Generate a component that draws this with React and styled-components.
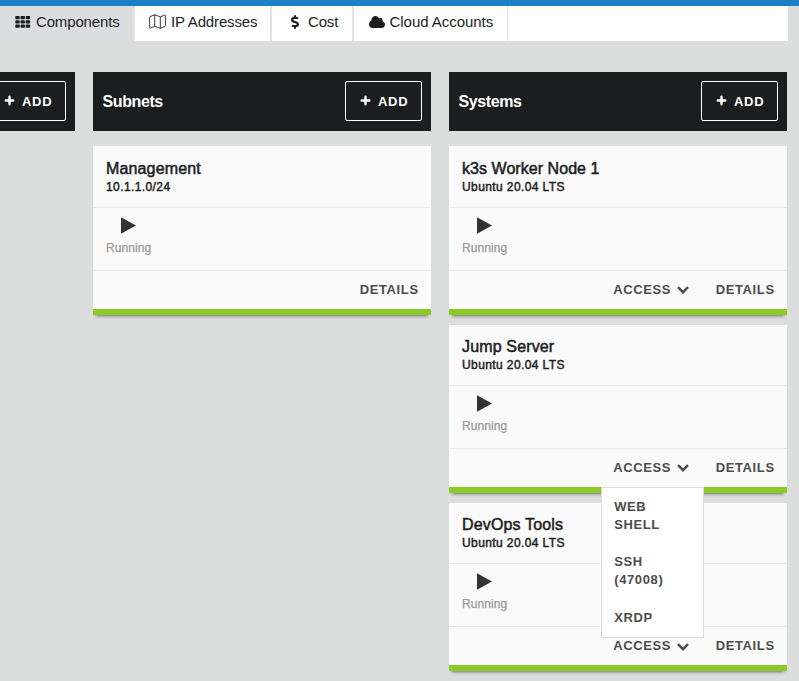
import React from "react";
import styled, { createGlobalStyle } from "styled-components";

const GlobalStyle = createGlobalStyle`
  * { box-sizing: border-box; }
  body {
    margin: 0;
    background: #dcdedd;
    color: #1c1d1e;
    font-family: "Liberation Sans", Arial, sans-serif;
    overflow: hidden;
  }
`;

const Page = styled.div`
  width: 799px;
  height: 681px;
  overflow: hidden;
`;

const TopBar = styled.div`
  height: 6px;
  background: #1b80c4;
`;

const TabBar = styled.nav`
  display: flex;
  height: 35px;
  width: 788px;
  background: #fff;
`;

const Tab = styled.a`
  display: flex;
  width: ${(p) => p.$width}px;
  padding-left: ${(p) => p.$pad}px;
  border-right: ${(p) => p.$edge ?? 2}px solid #e3e4e5;
  background: ${(p) => (p.$active ? "#dcdde0" : "#fff")};
  font-size: 15px;
  line-height: 32px;
  white-space: nowrap;

  svg { flex: none; margin: ${(p) => p.$iconTop}px ${(p) => p.$gap}px 0 0; }
`;

const TabText = styled.span`
  letter-spacing: ${(p) => p.$track ?? 0}px;
`;

const Board = styled.main`
  display: grid;
  grid-template-columns: 338px 338px 338px;
  column-gap: 18px;
  align-items: start;
  width: 1050px;
  margin: 31px 0 0 -263px;
`;

const ColumnHeader = styled.header`
  display: flex;
  align-items: flex-start;
  justify-content: space-between;
  height: 59px;
  padding: 9px 9px 0 9.5px;
  background: #1c1d1f;
  color: #fff;
`;

const ColumnTitle = styled.h2`
  margin: 11px 0 0;
  font-size: 16px;
  line-height: 20px;
  font-weight: 700;
  letter-spacing: -0.4px;
`;

const AddButton = styled.button`
  display: flex;
  align-items: center;
  gap: 7px;
  width: 77px;
  height: 40px;
  padding: 2px 0 0 14px;
  border: 1px solid #fff;
  border-radius: 2px;
  background: transparent;
  color: #fff;
  font: 700 13px/18px "Liberation Sans", Arial, sans-serif;
  letter-spacing: 0.7px;

  svg { margin-top: -4px; }
`;

const CardList = styled.div`
  display: flex;
  flex-direction: column;
  gap: 9.9px;
  padding-top: 15.4px;
`;

const Card = styled.article`
  height: 168.4px;
  background: #fafafa;
  border-bottom: 6px solid #8bca27;
  box-shadow: 0 4px 3px -3px rgba(0, 0, 0, 0.5);
`;

const CardHeader = styled.div`
  height: 60.4px;
  padding: 12.2px 13px 0;
`;

const CardTitle = styled.h3`
  margin: 0 0 1.1px;
  font-size: 16px;
  line-height: 19px;
  font-weight: 400;
  letter-spacing: ${(p) => p.$track ?? 0}px;
  -webkit-text-stroke: 0.5px currentColor;
`;

const CardSubtitle = styled.div`
  font-size: 12px;
  line-height: 17px;
  letter-spacing: 0.4px;
  -webkit-text-stroke: 0.45px currentColor;
`;

const CardStatus = styled.div`
  display: flex;
  flex-direction: column;
  height: 63px;
  padding: 9px 13px 0;
  border-top: 1px solid #e8e9e9;
  color: #999;
  font-size: 12px;
  line-height: 16px;
  letter-spacing: 0.08px;
  -webkit-text-stroke: 0.25px currentColor;

  svg { margin: 0 0 6px 15px; }
`;

const CardFooter = styled.div`
  display: flex;
  justify-content: flex-end;
  gap: 27px;
  height: 39px;
  padding: 9.8px 12.3px 0;
  border-top: 1px solid #e8e9e9;
`;

const Action = styled.div`
  position: relative;
  display: flex;
  height: 18px;
  color: #4c4c4c;
  font-size: 13px;
  font-weight: 700;
  line-height: 18px;
  letter-spacing: 0.63px;

  > svg { margin: 5.5px 0 0 5.5px; }
`;

const Menu = styled.div`
  position: absolute;
  z-index: 2;
  top: 28.4px;
  left: -12px;
  display: flex;
  flex-direction: column;
  gap: 19.15px;
  width: 103px;
  height: 151px;
  padding: 10px 12px;
  border: 1px solid #dadbdb;
  background: #fff;
`;

const MenuItem = styled.a`
  width: 60px;
  line-height: 18px;
`;

const GridIcon = () => (
  <svg width="16" height="12" viewBox="0 0 16 12" fill="#1c1d1f">
    {[0, 4.2, 8.4].map((y) =>
      [0.3, 5.5, 10.7].map((x) => (
        <rect key={`${x}-${y}`} x={x} y={y} width="4.4" height="3.3" rx="0.7" />
      ))
    )}
  </svg>
);

const MapIcon = () => (
  <svg width="17" height="16" viewBox="0 0 17 16" fill="none" stroke="#333" strokeWidth="0.95" strokeLinejoin="round">
    <path d="M.6 3.3Q.6 2.8 1.1 2.6L5.7.8 11.3 2.9 15.7 1.1Q16.4.9 16.4 1.6V11.7Q16.4 12.2 15.9 12.4L11.3 14.4 5.7 12.3 1.3 14.1Q.6 14.4.6 13.7Z" />
    <path d="M5.7.8V12.3M11.3 2.9V14.4" />
  </svg>
);

const DollarIcon = () => (
  <svg width="8" height="14" viewBox="0 0 288 512" fill="#1c1d1f" preserveAspectRatio="none">
    <path d="M209.2 233.4l-108-31.6C88.7 198.2 80 186.5 80 173.5c0-16.3 13.2-29.5 29.5-29.5h66.3c12.2 0 24.2 3.7 34.2 10.5 6.1 4.1 14.3 3.1 19.5-2l34.8-34c7.1-6.9 6.1-18.4-1.8-24.5C238 74.8 207.4 64.1 176 64V16c0-8.8-7.2-16-16-16h-32c-8.8 0-16 7.2-16 16v48h-2.5C45.8 64-5.4 118.7.5 183.6c4.2 46.1 39.4 83.6 83.8 96.6l102.5 30c12.5 3.7 21.2 15.3 21.2 28.3 0 16.3-13.2 29.5-29.5 29.5h-66.3C100 368 88 364.3 78 357.5c-6.1-4.1-14.3-3.1-19.5 2l-34.8 34c-7.1 6.9-6.1 18.4 1.8 24.5 24.5 19.2 55.1 29.9 86.5 30v48c0 8.8 7.2 16 16 16h32c8.8 0 16-7.2 16-16v-48.2c46.6-.9 90.3-28.6 105.7-72.7 21.5-61.6-14.6-124.8-72.5-141.7z" />
  </svg>
);

const CloudIcon = () => (
  <svg width="16" height="12" viewBox="0 0 640 448" fill="#1c1d1f" preserveAspectRatio="none">
    <path d="M537.6 194.6c4-10.7 6.4-22.4 6.4-34.6 0-53-43-96-96-96-19.7 0-38.1 6-53.3 16.2C367 32.2 315.3 0 256 0c-88.4 0-160 71.6-160 160 0 2.7.1 5.4.2 8.1C40.2 187.8 0 241.2 0 304c0 79.5 64.5 144 144 144h368c70.7 0 128-57.3 128-128 0-61.9-44-113.6-102.4-125.4z" />
  </svg>
);

const PlusIcon = () => (
  <svg width="11" height="11" viewBox="0 0 11 11" fill="none" stroke="#fff" strokeWidth="2.4" strokeLinecap="round">
    <path d="M5.5 1.7V9.300M1.700 5.500H9.300" />
  </svg>
);

const PlayIcon = () => (
  <svg width="15" height="17" viewBox="0 0 15 17" fill="#333">
    <path d="M0 .2 15 8.5 0 16.8Z" />
  </svg>
);

const ChevronIcon = () => (
  <svg width="12" height="8" viewBox="0 0 12 8" fill="none" stroke="#4c4c4c" strokeWidth="2.4">
    <path d="M1 1.2 6 6.2 11 1.2" />
  </svg>
);

const Add = () => (
  <AddButton>
    <PlusIcon />
    ADD
  </AddButton>
);

const accessItems = ["WEB SHELL", "SSH (47008)", "XRDP"];

function ResourceCard({ item }) {
  return (
    <Card>
      <CardHeader>
        <CardTitle $track={item.track}>{item.title}</CardTitle>
        <CardSubtitle>{item.subtitle}</CardSubtitle>
      </CardHeader>
      <CardStatus>
        <PlayIcon />
        Running
      </CardStatus>
      <CardFooter>
        {item.access && (
          <Action>
            ACCESS
            <ChevronIcon />
            {item.open && (
              <Menu>
                {accessItems.map((label) => (
                  <MenuItem key={label}>{label}</MenuItem>
                ))}
              </Menu>
            )}
          </Action>
        )}
        <Action>DETAILS</Action>
      </CardFooter>
    </Card>
  );
}

const columns = [
  { title: "", items: [] },
  {
    title: "Subnets",
    items: [{ title: "Management", subtitle: "10.1.1.0/24", track: 0.15 }],
  },
  {
    title: "Systems",
    items: [
      { title: "k3s Worker Node 1", subtitle: "Ubuntu 20.04 LTS", access: true, track: 0.05 },
      { title: "Jump Server", subtitle: "Ubuntu 20.04 LTS", access: true, open: true, track: 0.15 },
      { title: "DevOps Tools", subtitle: "Ubuntu 20.04 LTS", access: true, track: 0.15 },
    ],
  },
];

export default function App() {
  return (
    <Page>
      <GlobalStyle />
      <TopBar />
      <TabBar>
        <Tab $width={135} $pad={15} $gap={5} $iconTop={10} $active>
          <GridIcon />
          <TabText $track={-0.15}>Components</TabText>
        </Tab>
        <Tab $width={137} $pad={14} $gap={5} $iconTop={8}>
          <MapIcon />
          <TabText $track={-0.15}>IP Addresses</TabText>
        </Tab>
        <Tab $width={82} $pad={19} $gap={9} $iconTop={9}>
          <DollarIcon />
          <TabText $track={-0.15}>Cost</TabText>
        </Tab>
        <Tab $width={154} $pad={15} $gap={4.5} $iconTop={9.5} $edge={1}>
          <CloudIcon />
          <TabText $track={-0.04}>Cloud Accounts</TabText>
        </Tab>
      </TabBar>
      <Board>
        {columns.map((column, index) => (
          <section key={index}>
            <ColumnHeader>
              <ColumnTitle>{column.title}</ColumnTitle>
              <Add />
            </ColumnHeader>
            <CardList>
              {column.items.map((item) => (
                <ResourceCard key={item.title} item={item} />
              ))}
            </CardList>
          </section>
        ))}
      </Board>
    </Page>
  );
}
